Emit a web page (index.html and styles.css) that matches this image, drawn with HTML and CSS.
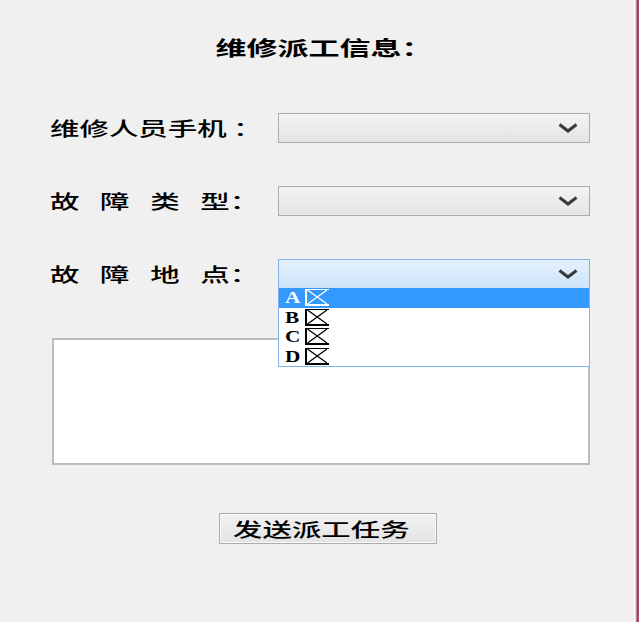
FILE: index.html
```html
<!DOCTYPE html>
<html lang="zh-CN">
<head>
<meta charset="utf-8">
<title>维修派工信息</title>
<link rel="stylesheet" href="styles.css">
</head>
<body>
<div class="window">
  <div class="main">
    <h1 class="title"><span class="stretch center">维修派工信息：</span></h1>
    <div class="form">
      <div class="label"><span class="stretch">维修人员手机<span class="colon-wide">：</span></span></div>
      <div class="select">
        <svg class="chev" width="20" height="10" viewBox="0 0 20 10"><path d="M1.5 1.5 L10 8 L18.5 1.5" /></svg>
      </div>
      <div class="label"><span class="stretch"><span class="spread">故障类</span>型<span class="colon-tight">：</span></span></div>
      <div class="select">
        <svg class="chev" width="20" height="10" viewBox="0 0 20 10"><path d="M1.5 1.5 L10 8 L18.5 1.5" /></svg>
      </div>
      <div class="label"><span class="stretch"><span class="spread">故障地</span>点<span class="colon-tight">：</span></span></div>
      <div class="select open">
        <svg class="chev" width="20" height="10" viewBox="0 0 20 10"><path d="M1.5 1.5 L10 8 L18.5 1.5" /></svg>
        <ul class="list">
          <li class="item selected"><span class="letter">A</span><svg class="tofu" width="24" height="17" viewBox="0 0 24 17"><rect x="0" y="0" width="2" height="17"/><rect x="0" y="0" width="24" height="1"/><rect x="0" y="15" width="24" height="2"/><path d="M2.5 1 L22 15 M22 1 L2.5 15"/></svg></li>
          <li class="item"><span class="letter">B</span><svg class="tofu" width="24" height="17" viewBox="0 0 24 17"><rect x="0" y="0" width="2" height="17"/><rect x="0" y="0" width="24" height="1"/><rect x="0" y="15" width="24" height="2"/><path d="M2.5 1 L22 15 M22 1 L2.5 15"/></svg></li>
          <li class="item"><span class="letter">C</span><svg class="tofu" width="24" height="17" viewBox="0 0 24 17"><rect x="0" y="0" width="2" height="17"/><rect x="0" y="0" width="24" height="1"/><rect x="0" y="15" width="24" height="2"/><path d="M2.5 1 L22 15 M22 1 L2.5 15"/></svg></li>
          <li class="item"><span class="letter">D</span><svg class="tofu" width="24" height="17" viewBox="0 0 24 17"><rect x="0" y="0" width="2" height="17"/><rect x="0" y="0" width="24" height="1"/><rect x="0" y="15" width="24" height="2"/><path d="M2.5 1 L22 15 M22 1 L2.5 15"/></svg></li>
        </ul>
      </div>
    </div>
    <div class="textarea"></div>
    <button class="send" type="button"><span class="stretch">发送派工任务</span></button>
  </div>
  <div class="edge"></div>
</div>
</body>
</html>
```

FILE: styles.css
```css
html, body {
  margin: 0;
  padding: 0;
}
body {
  background: #f0f0f0;
  font-family: "Noto Sans CJK SC", "Noto Sans", sans-serif;
  color: #000;
  height: 622px;
  overflow: hidden;
}
.window {
  display: flex;
  height: 622px;
}
.main {
  width: 634px;
  flex: none;
  padding-top: 38px;
  box-sizing: border-box;
}
.edge {
  width: 5px;
  flex: none;
  background: linear-gradient(to right, #ffffff 0 1px, #e2d2d8 1px 2px, #bf8299 2px 3px, #a2456b 3px 5px);
}
.stretch {
  display: inline-block;
  transform: scaleX(1.55);
  transform-origin: left center;
  white-space: nowrap;
}
.stretch.center {
  transform-origin: center center;
}
.spread {
  letter-spacing: 13.3px;
}
.colon-wide {
  margin-left: 4px;
}
.colon-tight {
  margin-left: 0;
}
.title {
  margin: 0;
  font-size: 20px;
  line-height: 20px;
  font-weight: 700;
  text-align: center;
  padding-left: 14px;
}
.form {
  margin-top: 55px;
  padding-left: 50px;
  display: grid;
  grid-template-columns: 228px 312px;
  grid-auto-rows: 30px;
  row-gap: 43px;
  align-items: center;
}
.label {
  font-size: 19px;
  line-height: 20px;
  font-weight: 500;
}
.select {
  position: relative;
  height: 30px;
  box-sizing: border-box;
  border: 1px solid #acacac;
  background: linear-gradient(#f3f3f3, #e4e4e4);
  display: flex;
  align-items: center;
  justify-content: flex-end;
  padding-right: 11px;
}
.select.open {
  border-color: #7eb4ea;
  background: linear-gradient(#e4f0fc, #cde4f9);
}
.chev path {
  fill: none;
  stroke: #3a3a3a;
  stroke-width: 3;
}
.list {
  position: absolute;
  top: 100%;
  left: -1px;
  right: -1px;
  margin: 0;
  padding: 0;
  list-style: none;
  background: #fff;
  border: 1px solid #7eb4ea;
  border-top: none;
  z-index: 2;
}
.item {
  height: 19.5px;
  display: flex;
  align-items: center;
  padding-left: 6px;
}
.item.selected {
  background: #3399ff;
  color: #fff;
}
.letter {
  display: inline-block;
  width: 20px;
  font-family: "Liberation Serif", serif;
  font-weight: 700;
  font-size: 17px;
  line-height: 17px;
  transform: scaleX(1.25);
  transform-origin: left center;
}
.tofu rect {
  fill: #000;
}
.tofu path {
  fill: none;
  stroke: #000;
  stroke-width: 1.3;
}
.item.selected .tofu rect {
  fill: #fff;
}
.item.selected .tofu path {
  stroke: #fff;
}
.textarea {
  margin-top: 49px;
  margin-left: 52px;
  width: 538px;
  height: 127px;
  box-sizing: border-box;
  background: #fff;
  border: 2px solid #bcbcbc;
}
.send {
  display: block;
  margin-top: 48px;
  margin-left: 219px;
  width: 218px;
  height: 31px;
  box-sizing: border-box;
  border: 1px solid #acacac;
  box-shadow: inset 0 0 0 1px #fbfbfb;
  background: linear-gradient(#f2f2f2, #e3e3e3);
  padding: 0 0 0 13px;
  text-align: left;
  font-family: "Noto Sans CJK SC", "Noto Sans", sans-serif;
  font-size: 19px;
  line-height: 20px;
  font-weight: 500;
  color: #000;
}
```
